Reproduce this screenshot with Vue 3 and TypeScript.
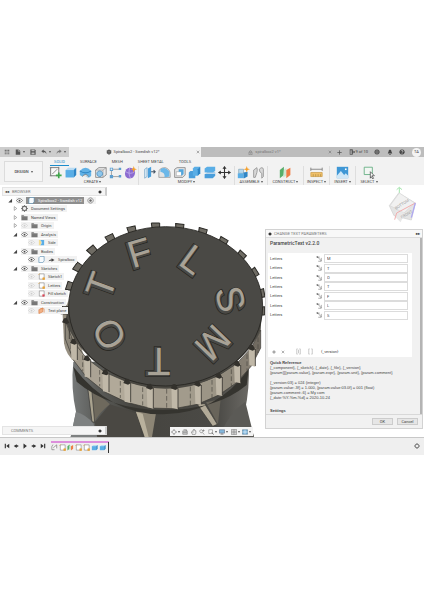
<script setup lang="ts">
import { h, ref } from 'vue'

type Shape = [d: string, fill?: string, stroke?: string, width?: number]

const K = '#555'
const B = '#5aaee6'
const D = '#2f86c6'

// Every icon is drawn on a 16 x 16 grid.
const icons: Record<string, Shape[]> = {
  grid: [['M2 2h3v3H2zM6.5 2h3v3h-3zM11 2h3v3h-3zM2 6.5h3v3H2zM6.5 6.5h3v3h-3zM11 6.5h3v3h-3zM2 11h3v3H2zM6.5 11h3v3h-3zM11 11h3v3h-3z', '#666']],
  file: [['M2 1h8l4 4v10H2z', '#555'], ['M9 1v5h5', 'none', '#ddd', 1.2]],
  save: [['M1 1h12l2 2v12H1z', '#555'], ['M4 2h8v4H4zM4 9h8v5H4z', '#bbb']],
  undo: [['M7 1L1 6l6 5V8c4 0 6 2 7 6 1-6-2-9-7-10z', '#555']],
  redo: [['M9 1l6 5-6 5V8c-4 0-6 2-7 6-1-6 2-9 7-10z', '#777']],
  cube: [['M8 1l6 3v7l-6 4-6-4V4z', '#555'], ['M2 4l6 3 6-3M8 7v8', 'none', '#aaa', 1]],
  lock: [['M3 7h10v8H3z', 'none', '#777', 1.6], ['M5 7V4q3-4 6 0v3M8 9v3', 'none', '#777', 1.6]],
  plus: [['M8 1v14M1 8h14', 'none', '#555', 2.4]],
  close: [['M3 3l10 10M13 3L3 13', 'none', '#666', 2]],
  ext: [['M2 1h8v14H2z', '#444'], ['M8 8h7M12 5l3 3-3 3', 'none', '#444', 2], ['M4 3h3v10H4z', '#ccc']],
  globe: [['M8 1a7 7 0 1 0 .1 0z', '#555'], ['M2 8h12M8 2q-5 6 0 12q5-6 0-12', 'none', '#999', 1]],
  bell: [['M8 1q-4 1-4 6L2 12h12l-2-5q0-5-4-6zM6 13h4v2H6z', '#444']],
  help: [['M8 1a7 7 0 1 0 .1 0z', '#444'], ['M5.500 6q1-3 4-2t0 4l-1.500 1v1M8 11v2', 'none', '#eee', 1.6]],
  sketch: [['M2 2h10v10H2z', '#fafafa', '#666', 1], ['M4 10L10 4M1 2h2M12 1v2M1 12h2', 'none', '#777', 1], ['M12 8v7M8.500 11.500h7', 'none', '#3fa64a', 2]],
  box: [['M2 5l3-3h10v9l-3 3H2z', '#b9dcf3'], ['M2 5h10v9H2z', B], ['M12 5l3-3v9l-3 3z', D]],
  revolve: [['M1 6q7-8 14 0v6q-3 4-6 1-3-2-5 0l-3-2z', '#63b2e6'], ['M1 6q7 5 14 0', 'none', D, 1.4], ['M4 13q4-5 8 0', '#e7e7e7', '#666', .8]],
  hole: [['M2 5l4-3h9v9l-4 3H2z', '#e8e8e8', '#777', .9], ['M2 5h9v9M11 5l4-3', 'none', '#888', .7], ['M7 6a3.500 3.500 0 1 0 .1 0z', '#8ec7ec', '#4d8ebc', 1]],
  pattern: [['M3 4h10M3 4v9h10', 'none', '#8a8a8a', .9], ['M1 2h4v4H1zM1 11h4v4H1zM12 11h3v3h-3zM12 2h3v3h-3z', '#5d9fd0'], ['M2 3h2v2H2z', '#dceefa']],
  form: [['M3 4q5-4 10 1 2 5-2 9-6 3-9-1-2-5 1-9z', '#8c6bd0'], ['M2 7q6 4 11 0M7 2q-2 8 1 13', 'none', '#c5b3ee', .9], ['M12 0l1 3 3 1-3 1-1 3-1-3-3-1 3-1z', '#f5a02c']],
  press: [['M2 4l3-2v11l-3 2z', '#dcecf7', '#5b93bb', .7], ['M6 3l4-2v12l-4 2z', '#4a9fdb'], ['M10 7h5M13 5l2 2-2 2', 'none', '#456', 1.3]],
  fillet: [['M1 14V8q0-6 8-6 6 2 6 8v4z', '#e4e4e4', '#888', .8], ['M3 4q6-4 11 3v6L8 14Q9 8 3 7z', '#6bb7e8']],
  shell: [['M2 4l3-2h10v9l-3 3H2z', '#e6e6e6', '#777', .9], ['M4 7h7v5H4z', '#fff', '#999', .7], ['M7 4h6v6l-3 2V7H7z', '#52a6dd']],
  combine: [['M1 8l2-2h6v9H1z', '#4b9fdb'], ['M6 3l2-2h7v8l-3 3H6z', B], ['M12 4l3-3v8l-3 3z', D]],
  split: [['M2 3l3-2h10v5l-3 2H2z', B], ['M2 10l3-2h10v4l-3 3H2z', '#4a9edb'], ['M1 9h14', 'none', '#f2f2f2', 1]],
  move: [['M8 1v14M1 8h14', 'none', '#333', 1.3], ['M8 0L5.500 3.500h5zM8 16l-2.500-3.500h5zM0 8l3.500-2.500v5zM16 8l-3.500-2.500v5z', '#333']],
  component: [['M2 4h6v5H2z', '#b8d9ee', '#79a', .7], ['M1 9h7v6H1z', B], ['M8 8l5-1v6l-4 2H8z', D], ['M12 0l1 3 3 1-3 1-1 3-1-3-3-1 3-1z', '#f5a02c']],
  joint: [['M2 5l4-3q1 3 0 6l-2 6H2zM9 4q4-4 5 0v9l-2 2V9q-3-1-3-5z', '#d8d8d8', '#888', .9]],
  planes: [['M1 5l5-4v10l-5 4z', '#57ae6a'], ['M6 5l3-3v10l-4 2z', '#cfe8d4'], ['M9 5l5-3v9l-5 4z', '#ee7d45']],
  ruler: [['M1 8h14v5H1z', '#f0c06a', '#c79540', .8], ['M1 4h14M1 2v4M15 2v4', 'none', '#777', 1], ['M4 10v3M7 10v3M10 10v3M13 10v3', 'none', '#a88840', .8]],
  image: [['M1 1h14v14H1z', '#3f97d5'], ['M1 12l5-6 4 5 2-2 3 3v3H1z', '#cfe7f7'], ['M11 3h2v2h-2z', '#fff']],
  select: [['M1.500 1.500h10v9h-10z', '#f2f6f3', '#5aa97a', 1], ['M9 7l5 5h-3l2 3-1 1-2-3-1 2z', '#fff', '#444', .9]],
  eye: [['M1 8q7-9 14 0-7 9-14 0z', '#fff', '#666', 1.8], ['M8 6a2 2 0 1 0 .1 0z', '#444']],
  eyeoff: [['M1 8q7-9 14 0-7 9-14 0z', '#f5f5f5', '#ccc', 1.4], ['M8 6a2 2 0 1 0 .1 0z', '#ccc']],
  folder: [['M1 3h5l2 2h7v9H1z', '#777'], ['M1 6h14', 'none', '#aaa', 1]],
  cog: [['M8 3a5 5 0 1 0 .1 0z', '#eee', '#666', 2.4], ['M8 0v3M8 13v3M0 8h3M13 8h3M2.500 2.500l2 2M11.500 11.500l2 2M13.500 2.500l-2 2M2.500 13.500l2-2', 'none', '#666', 1.8]],
  body: [['M2 4l3-3h9v10l-3 4H2z', '#f8fbfd', '#4782aa', 1.3]],
  analysis: [['M2 2h3q5 6 0 12H2z', '#f3dc92'], ['M5 2h9v12H5q7-6 0-12z', B]],
  sketchDoc: [['M3 2h11v12H3z', '#fff', '#777', 1.2], ['M1 4l3-3M11 11h4v4h-4z', '#e9a336', '#e9a336', 1.5]],
  sketchRed: [['M3 2h11v12H3z', '#fff', '#777', 1.2], ['M10 10h5v5h-5z', '#dc4455']],
  plane: [['M2 6l9-4v9l-9 4z', '#f2b186', '#d97738', 1.3], ['M5 4h9v9', 'none', '#d97738', 1.2]],
  arrow: [['M1 12q3-5 7-4V5l7 4-7 4v-3z', '#444']],
  closed: [['M4 2l8 6-8 6z', '#fff', '#666', 1.6]],
  opened: [['M13 2v12H1z', '#444']],
  radio: [['M8 2a6 6 0 1 0 .1 0z', '#fff', '#666', 1.6], ['M8 5a3 3 0 1 0 .1 0z', '#666']],
  dot: [['M8 2a6 6 0 1 0 .1 0z', '#333']],
  edit: [['M1 3h9M3 1l11 12M6 14h8V5', 'none', '#555', 1.3], ['M2 1l4 1-3 3z', '#444']],
  braces: [['M6 2H4v12h2M10 2h2v12h-2M8 4v8', 'none', '#999', 1.2]],
  braces2: [['M6 2H4v12h2M10 2h2v12h-2', 'none', '#999', 1.2]],
  orbit: [['M8 3a5 5 0 1 0 .1 0zM8 0v4M8 12v4M0 8h4M12 8h4', 'none', '#777', 1.5]],
  look: [['M2 5h12v9H2zM4 2h8v3', '#ccc', '#777', 1.6], ['M3 9h10', 'none', '#777', 1.4]],
  hand: [['M4 15L1 8l2-1 2 2V3h2V1h2v2h2v2h2v6l-2 4z', '#eee', '#666', 1.4]],
  zoom: [['M6 2a4 4 0 1 0 .1 0zM9 9l5 6M12 1v6M9 4h6', 'none', '#777', 1.6]],
  fit: [['M2 2h10v10H2z', '#f8f8f8', '#777', 1.4], ['M10 9l5 6', 'none', '#555', 2]],
  display: [['M1 2h14v9H1z', '#83b8dd', '#667', 1.5], ['M8 11v3M4 14h8', 'none', '#666', 1.5]],
  gridOn: [['M1 1h14v14H1z', '#e8e8e8', '#777', 1.5], ['M1 6h14M1 10h14M6 1v14M10 1v14', 'none', '#777', 1.2]],
  views: [['M1 2h14v12H1z', '#79b5df', '#56748b', 1.4], ['M8 2v12M1 8h14', 'none', '#fff', 1.4]],
  first: [['M2 2h3v12H2zM14 2v12L6 8z', '#333']],
  prev: [['M10 3v10L2 8zM10 6h4v4h-4z', '#333']],
  play: [['M4 1l9 7-9 7z', '#333']],
  next: [['M6 3v10l8-5zM2 6h4v4H2z', '#333']],
  last: [['M11 2h3v12h-3zM2 2v12l8-6z', '#333']],
  link: [['M2 4l3-2M2 5v8h6M5 9L13 2v8', '#fff', '#777', 1.6]],
}

const Icon = (p: { name: string; size?: number }) =>
  h(
    'svg',
    { viewBox: '0 0 16 16', width: p.size ?? 6, height: p.size ?? 6, 'aria-hidden': 'true' },
    (icons[p.name] ?? []).map(([d, fill = K, stroke = 'none', width = 1]) =>
      h('path', { d, fill, stroke, 'stroke-width': width }),
    ),
  )
Icon.props = ['name', 'size']

const tabs = ['SOLID', 'SURFACE', 'MESH', 'SHEET METAL', 'TOOLS']
const groups = [
  { name: 'CREATE', icons: ['sketch', 'box', 'revolve', 'hole', 'pattern', 'form'] },
  { name: 'MODIFY', icons: ['press', 'fillet', 'shell', 'combine', 'split', 'move'] },
  { name: 'ASSEMBLE', icons: ['component', 'joint'] },
  { name: 'CONSTRUCT', icons: ['planes'] },
  { name: 'INSPECT', icons: ['ruler'] },
  { name: 'INSERT', icons: ['image'] },
  { name: 'SELECT', icons: ['select'] },
]

interface Node {
  label: string
  level: 'root' | 'top' | 'child'
  toggle?: 'opened' | 'closed'
  icons: string[]
}
const tree: Node[] = [
  { label: 'Spiralbox2 - Swedish v12', level: 'root', toggle: 'opened', icons: ['eye'] },
  { label: 'Document Settings', level: 'top', toggle: 'closed', icons: ['cog'] },
  { label: 'Named Views', level: 'top', toggle: 'closed', icons: ['folder'] },
  { label: 'Origin', level: 'top', toggle: 'closed', icons: ['eyeoff', 'folder'] },
  { label: 'Analysis', level: 'top', toggle: 'opened', icons: ['eye', 'folder'] },
  { label: 'Side', level: 'child', icons: ['eyeoff', 'analysis'] },
  { label: 'Bodies', level: 'top', toggle: 'opened', icons: ['eye', 'folder'] },
  { label: 'Spiralbox', level: 'child', icons: ['eye', 'body', 'arrow'] },
  { label: 'Sketches', level: 'top', toggle: 'opened', icons: ['eye', 'folder'] },
  { label: 'Sketch1', level: 'child', icons: ['eyeoff', 'sketchDoc'] },
  { label: 'Letters', level: 'child', icons: ['eyeoff', 'sketchDoc'] },
  { label: 'Fill sketch', level: 'child', icons: ['eyeoff', 'sketchRed'] },
  { label: 'Construction', level: 'top', toggle: 'opened', icons: ['eye', 'folder'] },
  { label: 'Text plane', level: 'child', icons: ['eyeoff', 'plane'] },
]

const letters = ref(['M', 'T', 'O', 'T', 'F', 'L', 'S'])

// Recessed letters: position and rotation on the lid, and the shift of the lit wall.
const engraved = [
  { t: 'F', x: 236, y: 115, r: -17, dx: 3, dy: -4 },
  { t: 'L', x: 398, y: 135, r: 36, dx: 3, dy: -3 },
  { t: 'S', x: 512, y: 256, r: 77, dx: 1, dy: -5 },
  { t: 'M', x: 460, y: 388, r: 134, dx: -1, dy: -4 },
  { t: 'T', x: 292, y: 439, r: 180, dx: 5, dy: 2 },
  { t: 'O', x: 147, y: 362, r: -120, dx: -1, dy: -4 },
  { t: 'T', x: 120, y: 214, r: -70, dx: 2, dy: -4 },
]

const upperTeeth = [
  [14, 285, -80], [28, 213, -72], [52, 156, -55], [95, 104, -40], [150, 68, -25], [215, 43, -12], [287, 32, 0],
  [359, 35, 6], [428, 49, 16], [490, 78, 30], [545, 120, 42], [584, 172, 58], [605, 235, 80], [606, 288, 90],
]

// Blocks of the knurled wall: one per pair of neighbouring seams.
const seams = [[16, 318], [40, 380], [80, 430], [135, 472], [200, 500], [268, 515], [342, 516], [412, 506], [475, 482], [530, 446], [574, 398], [602, 345]]
const drop = (x: number) => Math.round(66 - Math.abs(x - 310) * 0.04)
const blocks = seams.slice(0, -1).map(([x, y], i) => {
  const [x2, y2] = seams[i + 1]
  const w = x2 - x
  return {
    wall: `M${x} ${y}L${x2} ${y2}V${y2 + drop(x2)}L${x} ${y + drop(x)}z`,
    rib: `M${x - 8} ${y - 2}L${x + 12} ${y + 2}V${y + drop(x) + 2}L${x - 6} ${y + drop(x) - 2}z`,
    notch: `M${x - 10} ${y + 4}l6-12 8-1 8 14-8 4z`,
    edge: `M${x + 12} ${y + 4}V${y + drop(x)}`,
    dash: `M${x + Math.round(w * 0.7)} ${Math.round(y + (y2 - y) * 0.7) + 6}v${drop(x) - 8}`,
    tone: ['#8d877a', '#a39b8c', '#aba394', '#b1a999', '#aca596', '#a59d8e', '#a29b8c', '#9c9586', '#928b7d', '#857e72', '#716b61'][i],
  }
})

const nav = ['orbit', 'look', 'hand', 'zoom', 'fit', 'display', 'gridOn', 'views']
const navDrop = new Set(['orbit', 'fit', 'display', 'gridOn', 'views'])
const history = ['link', 'sketchDoc', 'planes', 'sketchDoc', 'sketchDoc', 'box', 'box']
const transport = ['first', 'prev', 'play', 'next', 'last']
</script>

<template>
  <main class="app">
    <header class="titlebar">
      <div class="quick">
        <button aria-label="Data panel"><Icon name="grid" /></button>
        <button aria-label="File"><Icon name="file" /><i class="caret" /></button>
        <button aria-label="Save"><Icon name="save" /></button>
        <button aria-label="Undo"><Icon name="undo" /><i class="caret" /></button>
        <button aria-label="Redo"><Icon name="redo" /><i class="caret" /></button>
      </div>
      <div class="doc active">
        <span class="doc-name"><Icon name="cube" />Spiralbox2 - Swedish v12*</span>
        <button aria-label="Close document"><Icon name="close" :size="4" /></button>
      </div>
      <div class="doc">
        <span class="doc-name"><Icon name="lock" :size="5" />spiralbox2 v1*</span>
        <button aria-label="Close document"><Icon name="close" :size="4" /></button>
      </div>
      <div class="status">
        <button aria-label="New tab"><Icon name="plus" :size="5" /></button>
        <button class="ext"><Icon name="ext" />9 of 10</button>
        <button aria-label="Job status"><Icon name="globe" /></button>
        <button aria-label="Notifications"><Icon name="bell" /></button>
        <button aria-label="Help"><Icon name="help" /></button>
        <button class="avatar">TA</button>
      </div>
    </header>

    <section class="toolbar">
      <button class="design">DESIGN<i class="caret" /></button>
      <div class="ribbon">
        <nav class="ribbon-tabs">
          <a v-for="(t, i) in tabs" :key="t" href="#" :class="{ on: i === 0 }">{{ t }}</a>
        </nav>
        <div class="groups">
          <div v-for="g in groups" :key="g.name" class="group" :class="g.name.toLowerCase()">
            <div class="tools">
              <button v-for="n in g.icons" :key="n" :aria-label="n"><Icon :name="n" :size="13" /></button>
            </div>
            <button class="group-name">{{ g.name }}<i class="caret" /></button>
          </div>
        </div>
      </div>
    </section>

    <section class="canvas">
      <svg class="model" viewBox="0 0 630 666" aria-hidden="true">
        <defs>
          <linearGradient id="barrel" x1="0" x2="1">
            <stop offset="0" stop-color="#777a7a" />
            <stop offset=".14" stop-color="#5b5c59" />
            <stop offset=".35" stop-color="#45443f" />
            <stop offset=".8" stop-color="#4b4a46" />
            <stop offset="1" stop-color="#706e69" />
          </linearGradient>
        </defs>
        <path d="M40 440Q32 520 48 590L32 666H582L554 590Q570 520 566 440z" fill="url(#barrel)" />
        <path d="M48 590Q80 600 100 625L112 666H32z" fill="#7e8181" />
        <path d="M556 560Q500 600 480 666H582z" fill="#5b5a56" />
        <path d="M84 510L150 568Q120 590 100 625z" fill="#6e695d" />
        <path d="M82 510L95 520 104 622 96 620z" fill="#aaa38f" stroke="#333" stroke-width="2" />
        <path d="M104 622L150 568 232 596 246 666H112z" fill="#4a4843" />
        <path d="M228 590L288 594 276 666H256z" fill="#8c8575" />
        <path d="M228 590L248 596 266 666H254z" fill="#b9b19d" />
        <path d="M412 568L434 566 472 628 458 634z" fill="#b2aa98" stroke="#3a3935" stroke-width="2" />
        <path d="M438 562L482 552 474 628z" fill="#68645a" />
        <path d="M40 455Q150 600 310 598T566 462L560 510Q470 585 310 585T50 500z" fill="#35342f" />
        <path d="M8 300L28 250 70 420V440L44 440Q18 420 12 385z" fill="#968f81" />
        <path v-for="([x, y, r], i) in upperTeeth" :key="i" :transform="`translate(${x} ${y}) rotate(${r})`"
          d="M-13-8H12V14H-10z" fill="#6f6c64" stroke="#292824" stroke-width="3" />
        <g v-for="(b, i) in blocks" :key="b.wall">
          <path :d="b.wall" :fill="b.tone" stroke="#3a3833" stroke-width="2" />
          <path :d="b.dash" stroke="#4a473f" stroke-width="2" stroke-dasharray="14 7" fill="none" />
          <path v-if="i" :d="b.rib" fill="#c0b8a8" />
          <path :d="b.edge" stroke="#36342f" stroke-width="2.500" fill="none" />
        </g>
        <path d="M16 318L28 260Q30 400 160 470 310 550 460 472 600 400 607 270L602 345Q570 420 475 482 342 550 200 500 60 435 16 318z" fill="#4a4842" />
        <ellipse cx="317" cy="274" rx="291" ry="239" fill="#4a4945" stroke="#24231f" stroke-width="2.500" />
        <path v-for="b in blocks" :key="b.notch" :d="b.notch" fill="#33312c" />
        <g v-for="l in engraved" :key="`${l.t}${l.x}`" class="engraved">
          <text :transform="`translate(${l.x} ${l.y}) rotate(${l.r})`" y="41" class="rim">{{ l.t }}</text>
          <text :transform="`translate(${l.x} ${l.y}) rotate(${l.r})`" y="41" class="floor" aria-hidden="true">{{ l.t }}</text>
          <text :transform="`translate(${l.x + l.dx} ${l.y + l.dy}) rotate(${l.r})`" y="41" class="lit" aria-hidden="true">{{ l.t }}</text>
        </g>
      </svg>

      <svg class="viewcube" viewBox="0 0 132 132" aria-hidden="true">
        <path d="M58 24V8M50 14l8-7 8 7" stroke="#8fe09a" stroke-width="3" fill="none" />
        <path d="M56 24L106 54 94 105 42 92 28 62z" fill="#dedede" stroke="#c4c4c4" stroke-width="2" />
        <path d="M30 62L58 24 104 54 72 84z" fill="#eee" stroke="#cfcfcf" stroke-width="2" />
        <path d="M46 76L74 84 62 112 46 96z" fill="#e3e3e3" />
        <path d="M44 104L50 84 106 54" stroke="#ee9a9a" stroke-width="3" fill="none" />
        <path d="M106 54L94 98" stroke="#9b93ee" stroke-width="4" fill="none" />
        <text x="66" y="62" transform="rotate(-33 66 58)">BOTTOM</text>
        <text x="80" y="92" transform="rotate(-30 80 88)">FRONT</text>
      </svg>

      <aside class="browser">
        <h2 class="bar"><span class="bar-title"><b>◂◂</b>BROWSER</span><Icon name="dot" :size="4" /></h2>
        <ul class="tree">
          <li v-for="n in tree" :key="n.label" :class="n.level">
            <button v-if="n.toggle" class="toggle" :aria-label="`Toggle ${n.label}`"><Icon :name="n.toggle" :size="5" /></button>
            <span class="node">
              <Icon v-for="ic in n.icons" :key="ic" :name="ic" :size="7" />
              <span v-if="n.level === 'root'" class="root-name"><Icon name="body" :size="7" />{{ n.label }}</span>
              <span v-else>{{ n.label }}</span>
              <Icon v-if="n.level === 'root'" name="radio" :size="7" />
            </span>
          </li>
        </ul>
      </aside>

      <form class="dialog" @submit.prevent>
        <h2 class="dialog-bar"><span><Icon name="dot" :size="4" />CHANGE TEXT PARAMETERS</span><b>▸▸</b></h2>
        <div class="dialog-body">
          <h3>ParametricText v2.2.0</h3>
          <div class="sheet">
            <div class="rows">
              <div v-for="(_, i) in letters" :key="i" class="row">
                <label :for="`letter-${i}`">Letters</label>
                <button type="button" aria-label="Pick sketch text"><Icon name="edit" :size="6" /></button>
                <input :id="`letter-${i}`" v-model="letters[i]" type="text" />
              </div>
            </div>
            <div class="actions">
              <button type="button" aria-label="Add row"><Icon name="plus" :size="4" /></button>
              <button type="button" aria-label="Remove row"><Icon name="close" :size="4" /></button>
              <button type="button" class="brace" aria-label="Insert before"><Icon name="braces" :size="7" /></button>
              <button type="button" aria-label="Insert after"><Icon name="braces2" :size="7" /></button>
              <span class="version">{_version}</span>
            </div>
          </div>
          <div class="reference">
            <h4>Quick Reference</h4>
            <p>{_component}, {_sketch}, {_date}, {_file}, {_version}</p>
            <p>{param}[{param.value}, {param.expr}, {param.unit}, {param.comment}</p>
            <p class="gap">{_version:03} = 024 (integer)</p>
            <p>{param.value:.3f} = 1.000, {param.value:03.0f} = 001 (float)</p>
            <p>{param.comment:.6} = My com</p>
            <p>{_date:%Y-%m-%d} = 2020-10-24</p>
            <h4 class="gap">Settings</h4>
          </div>
        </div>
        <footer class="dialog-foot">
          <button type="submit">OK</button>
          <button type="button">Cancel</button>
        </footer>
      </form>

      <h2 class="bar comments"><span class="bar-title">COMMENTS</span><Icon name="dot" :size="4" /></h2>
      <div class="navbar">
        <button v-for="n in nav" :key="n" :aria-label="n"><Icon :name="n" :size="6" /><i v-if="navDrop.has(n)" class="caret" /></button>
      </div>
    </section>

    <footer class="timeline">
      <div class="transport">
        <button v-for="n in transport" :key="n" :aria-label="n"><Icon :name="n" :size="6" /></button>
      </div>
      <div class="history">
        <button v-for="(n, i) in history" :key="i" :aria-label="`Feature ${i + 1}`"><Icon :name="n" :size="7" /></button>
        <i class="marker" />
      </div>
      <button class="settings" aria-label="Timeline settings"><Icon name="cog" :size="6" /></button>
    </footer>
  </main>
</template>

<style>
body {
  margin: 0;
  background: #fff;
}
</style>

<style scoped>
.app {
  padding: 147px 0;
  font: 4px/6px Roboto, 'Liberation Sans', sans-serif;
  color: #444;
}
.app :deep(svg) {
  display: block;
  flex: none;
}
button {
  display: flex;
  align-items: center;
  gap: 2px;
  padding: 0;
  border: 0;
  background: none;
  font: inherit;
  color: inherit;
}
h2, h3, h4, p, ul {
  margin: 0;
  padding: 0;
  font: inherit;
}
a {
  color: inherit;
  text-decoration: none;
}
.caret {
  border: 1px solid transparent;
  border-top: 2px solid #555;
  border-bottom: 0;
}

.titlebar {
  display: flex;
  height: 10px;
  background: #bdbdbd;
}
.quick {
  display: flex;
  align-items: center;
  justify-content: space-between;
  box-sizing: border-box;
  width: 69px;
  padding: 0 3px 0 4px;
  background: #cdcdcd;
}
.doc {
  flex: 132 1 0;
  display: flex;
  align-items: center;
  justify-content: space-between;
  padding-right: 1px;
  color: #777;
}
.doc.active {
  background: #f2f2f2;
  color: #444;
}
.doc-name {
  flex: 1;
  display: flex;
  align-items: center;
  justify-content: center;
  gap: 2px;
}
.status {
  display: flex;
  align-items: center;
  justify-content: space-between;
  box-sizing: border-box;
  width: 91px;
  padding: 0 3px 0 4px;
}
.ext {
  gap: 1px;
}
.avatar {
  justify-content: center;
  width: 9px;
  height: 9px;
  border-radius: 50%;
  background: #f4f4f4;
}

.toolbar {
  display: flex;
  height: 28px;
  background: #f2f2f2;
}
.design {
  box-sizing: border-box;
  width: 39px;
  height: 21px;
  margin: 4px 4px 0;
  justify-content: center;
  border: 1px solid #dcdcdc;
  background: #f5f5f5;
  font-weight: 500;
}
.ribbon {
  flex: 1;
}
.ribbon-tabs {
  display: flex;
  gap: 15px;
  padding: 2px 0 0 3px;
}
.ribbon-tabs a {
  height: 6px;
  border-bottom: 1px solid transparent;
  white-space: nowrap;
}
.ribbon-tabs .on {
  margin-right: -4px;
  padding: 0 4px;
  color: #1c8dcc;
  border-color: #1c8dcc;
}
.groups {
  display: flex;
}
.group {
  box-sizing: border-box;
  display: flex;
  flex-direction: column;
  align-items: center;
  width: 26px;
  height: 19px;
  border-right: 1px solid #dedede;
}
.group.create {
  width: 92px;
}
.group.modify {
  width: 96px;
}
.group.assemble {
  width: 33px;
}
.group.construct {
  width: 36px;
}
.group.select {
  border: 0;
}
.tools {
  display: flex;
  gap: 2px;
}
.group-name {
  gap: 1px;
  white-space: nowrap;
}

.canvas {
  position: relative;
  height: 252px;
  overflow: hidden;
  background: #fff;
}
.model {
  position: absolute;
  left: 60px;
  top: 30px;
  width: 210px;
  height: 222px;
}
.engraved text {
  font: 114px 'Liberation Sans', sans-serif;
  text-anchor: middle;
}
.rim {
  fill: #25241f;
  stroke: #25241f;
  stroke-width: 11px;
}
.floor {
  fill: #4a4945;
  stroke: #4a4945;
  stroke-width: 7px;
}
.lit {
  fill: #a8a296;
}
.viewcube {
  position: absolute;
  right: 0;
  top: 0;
  width: 44px;
  height: 44px;
  opacity: 0.8;
}
.viewcube text {
  font: 12px Roboto, sans-serif;
  text-anchor: middle;
  fill: #888;
}

.browser {
  position: absolute;
  left: 2px;
  top: 2px;
  width: 105px;
}
.bar {
  box-sizing: border-box;
  display: flex;
  align-items: center;
  justify-content: space-between;
  height: 9px;
  padding: 0 3px 0 2px;
  border: 1px solid #e4e4e4;
  border-right: 2px solid #ccc;
  background: #f5f5f5;
  color: #777;
}
.bar-title b {
  margin-right: 3px;
  color: #333;
}
.tree {
  display: grid;
  grid-auto-rows: 1fr;
  height: 119px;
  list-style: none;
}
.tree li {
  display: flex;
  align-items: center;
  gap: 1px;
  white-space: nowrap;
}
.root {
  padding-left: 6px;
}
.top {
  padding-left: 11px;
}
.child {
  padding-left: 26px;
}
.toggle {
  margin-right: 2px;
}
.node {
  display: flex;
  align-items: center;
  gap: 3px;
  padding-right: 2px;
  background: #f2f2f2;
  line-height: 7px;
}
.root-name {
  display: flex;
  gap: 3px;
  padding: 0 2px;
  background: #8e8e8e;
  color: #fff;
}

.dialog {
  position: absolute;
  right: 1px;
  top: 44px;
  width: 158px;
  box-sizing: border-box;
  border: 1px solid #d2d2d2;
  background: #f1f1f1;
}
.dialog-bar {
  display: flex;
  align-items: center;
  justify-content: space-between;
  height: 7px;
  padding: 0 2px;
  border-bottom: 1px solid #ddd;
  background: #f8f8f8;
  color: #777;
}
.dialog-bar span {
  display: flex;
  align-items: center;
  gap: 2px;
}
.dialog-bar b {
  color: #333;
}
.dialog-body {
  padding: 1px 8px 1px 4px;
  border-right: 2px solid #b4b4b4;
}
h3 {
  font-size: 5px;
  font-weight: 500;
  line-height: 8px;
}
.sheet {
  margin: 6px 0 3px -2px;
  padding: 1px 4px 1px 2px;
  background: #fff;
}
.rows {
  display: grid;
  grid-auto-rows: 1fr;
  height: 66px;
}
.row {
  display: grid;
  grid-template-columns: 46px 8px 1fr;
  align-items: center;
}
.row input {
  box-sizing: border-box;
  width: 100%;
  height: 9px;
  padding: 0 2px;
  border: 1px solid #dcdcdc;
  background: #fff;
  font: inherit;
  color: inherit;
}
.actions {
  display: flex;
  align-items: center;
  gap: 5px;
  padding: 28px 0 1px 2px;
}
.brace {
  margin-left: 5px;
}
.version {
  margin-left: 2px;
}
.reference {
  font-family: 'Liberation Sans', sans-serif;
  line-height: 5px;
  white-space: nowrap;
}
h4 {
  font-weight: 700;
}
.gap {
  margin-top: 5px;
}
.reference h4.gap {
  margin-top: 8px;
}
.dialog-foot {
  display: flex;
  justify-content: flex-end;
  gap: 4px;
  padding: 3px 4px;
  border-top: 1px solid #d8d8d8;
}
.dialog-foot button {
  box-sizing: border-box;
  justify-content: center;
  width: 21px;
  height: 7px;
  border: 1px solid #ccc;
  background: #e6e6e6;
}

.comments {
  position: absolute;
  left: 2px;
  bottom: 2px;
  width: 105px;
  padding-left: 8px;
}
.navbar {
  position: absolute;
  left: 170px;
  bottom: 1px;
  display: flex;
  justify-content: space-between;
  align-items: center;
  box-sizing: border-box;
  width: 83px;
  height: 9px;
  padding: 0 2px 0 1px;
  background: #f4f4f4;
}
.navbar button {
  gap: 1px;
}

.timeline {
  display: flex;
  align-items: center;
  box-sizing: border-box;
  height: 18px;
  padding: 0 4px 1px;
  border-top: 1px solid #c8c8c8;
  background: #efefef;
}
.transport {
  display: flex;
  gap: 3px;
  width: 47px;
}
.history {
  display: flex;
  gap: 1px;
  border-top: 2px solid #dd8fdc;
}
.marker {
  width: 1px;
  height: 9px;
  margin: -1px 0 -1px 1px;
  border-top: 2px solid #333;
  background: #333;
}
.settings {
  margin-left: auto;
}
</style>
